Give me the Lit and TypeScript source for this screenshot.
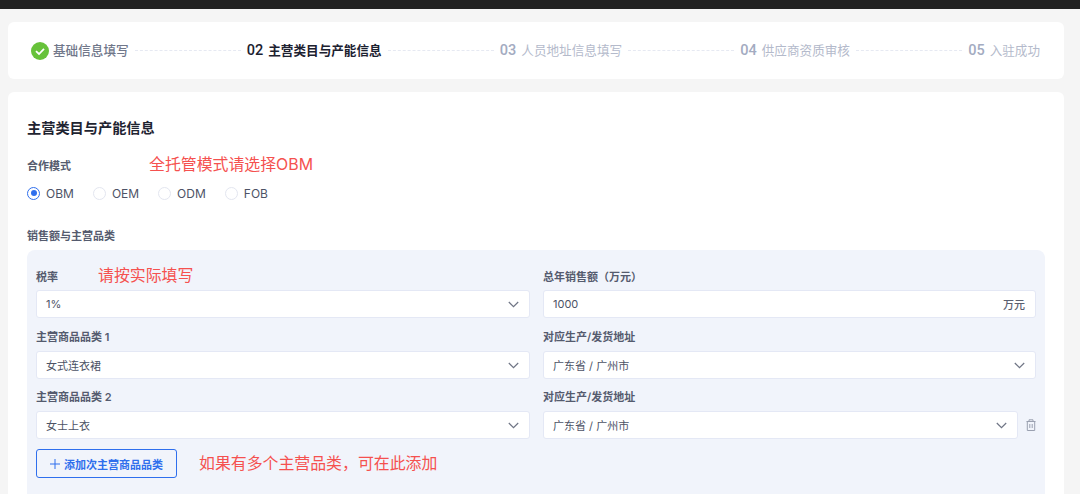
import { LitElement, html, css } from "lit";
import { customElement } from "lit/decorators.js";

const chevron = html`<svg class="chev" width="11" height="7" viewBox="0 0 11 7" fill="none"><path d="M.8 1 5.500 5.700 10.200 1" stroke="#6f7585" stroke-width="1.200"/></svg>`;

@customElement("app-root")
export class AppRoot extends LitElement {
  static styles = css`
    :host { display: block; width: 1080px; height: 494px; overflow: hidden; background: #f5f5f5;
      font-family: Inter, "Noto Sans CJK SC", "Noto Sans", sans-serif; color: #333a4d; }
    .top { height: 9px; background: #222222; }
    .wrap { padding: 13px 16px 0 8px; display: flex; flex-direction: column; gap: 13px; }
    .card { background: #fff; border-radius: 6px; }
    .steps { height: 57px; display: flex; align-items: center; padding: 0 24px 0 23px; gap: 6px; font-size: 12.600px; }
    .step { display: flex; align-items: center; gap: 5px; color: #b4bacb; white-space: nowrap; }
    .step span { padding-bottom: 2px; }
    .step b { font-family: Roboto, sans-serif; font-weight: 500; font-size: 14.500px; color: #a3abc1; }
    .step.done { color: #70778a; gap: 4px; font-weight: 500; }
    .step.active { color: #1c2130; font-weight: 600; }
    .step.active b { color: #1c2130; font-weight: 500; }
    .line { flex: 1; height: 0; border-top: 1px dashed #e6e9f2; }
    .main { padding: 26px 19px 0; height: 420px; }
    h2 { margin: 0; font-size: 14.200px; line-height: 20px; font-weight: 600; color: #1f2431; }
    .lab { font-size: 11px; line-height: 16px; font-weight: 600; color: #555b6e; }
    .labrow { display: flex; align-items: center; height: 16px; }
    .note { color: #f5514f; font-size: 15.900px; line-height: 20px; white-space: nowrap; margin-top: -3px; }
    .mode { margin-top: 20px; }
    .mode .note { margin-left: 78px; }
    .radios { display: flex; align-items: center; margin-top: 9px; height: 20px; font-size: 12px; color: #4d5366; }
    .radio { display: flex; align-items: center; gap: 6px; margin-right: 19px; }
    .dot { width: 13px; height: 13px; box-sizing: border-box; border-radius: 50%; border: 1px solid #e3e6f0; background: #fff; }
    .dot.on { border: 1.500px solid #2f6fed; display: flex; align-items: center; justify-content: center; }
    .dot.on::after { content: ""; width: 6px; height: 6px; border-radius: 50%; background: #2f6fed; }
    .sales { margin-top: 25px; }
    .panel { margin-top: 6px; background: #f1f4fb; border-radius: 8px; padding: 19px 9px 16px; height: 240px; box-sizing: content-box; }
    .grid { display: grid; grid-template-columns: 494px 493px; column-gap: 13px; }
    .cell .note { margin-left: 40px; }
    .field { margin-top: 6px; height: 28px; box-sizing: border-box; background: #fff; border: 1px solid #e4e8f5; border-radius: 3px;
      display: flex; align-items: center; justify-content: space-between; padding: 0 10px 0 9px; font-size: 11px; color: #4d5366; }
    .first .field { margin-top: 5px; }
    .unit { color: #5b6070; font-weight: 500; }
    .row { margin-top: 11px; }
    .row.r3 { margin-top: 10px; }
    .withtrash { display: flex; align-items: flex-start; gap: 8px; }
    .withtrash .field { flex: 1; }
    .trash { margin-top: 14px; width: 10px; height: 12px; flex: none; }
    .actions { display: flex; align-items: center; margin-top: 10px; }
    .actions .note { margin: 0 0 0 22px; }
    button { font: inherit; width: 141px; height: 29px; box-sizing: border-box; background: #fff0; border: 1px solid #2f6fed; border-radius: 3px;
      color: #2f6fed; font-size: 11px; font-weight: 600; display: flex; align-items: center; justify-content: center; gap: 4px; padding: 0; }
  `;

  private step(n: string, t: string) {
    return html`<div class="step"><b>${n}</b><span>${t}</span></div>`;
  }
  private radio(t: string, on = false) {
    return html`<div class="radio"><span class="dot ${on ? "on" : ""}"></span>${t}</div>`;
  }
  private select(v: string) {
    return html`<div class="field"><span>${v}</span>${chevron}</div>`;
  }

  render() {
    return html`
      <div class="top"></div>
      <div class="wrap">
        <div class="card steps">
          <div class="step done">
            <svg width="18" height="18" viewBox="0 0 18 18"><circle cx="9" cy="9" r="9" fill="#67c23a"/><path d="M5 9.200 8 12l5-5.200" fill="none" stroke="#fff" stroke-width="1.800"/></svg>
            <span>基础信息填写</span>
          </div>
          <div class="line"></div>
          <div class="step active"><b>02</b><span>主营类目与产能信息</span></div>
          <div class="line"></div>
          ${this.step("03", "人员地址信息填写")}
          <div class="line"></div>
          ${this.step("04", "供应商资质审核")}
          <div class="line"></div>
          ${this.step("05", "入驻成功")}
        </div>
        <div class="card main">
          <h2>主营类目与产能信息</h2>
          <div class="labrow mode"><span class="lab">合作模式</span><span class="note">全托管模式请选择OBM</span></div>
          <div class="radios">${this.radio("OBM", true)}${this.radio("OEM")}${this.radio("ODM")}${this.radio("FOB")}</div>
          <div class="lab sales">销售额与主营品类</div>
          <div class="panel">
            <div class="grid">
              <div class="cell first">
                <div class="labrow"><span class="lab">税率</span><span class="note">请按实际填写</span></div>
                ${this.select("1%")}
              </div>
              <div class="cell first">
                <div class="labrow"><span class="lab">总年销售额（万元）</span></div>
                <div class="field"><span>1000</span><span class="unit">万元</span></div>
              </div>
              <div class="cell row">
                <div class="labrow"><span class="lab">主营商品品类 1</span></div>
                ${this.select("女式连衣裙")}
              </div>
              <div class="cell row">
                <div class="labrow"><span class="lab">对应生产/发货地址</span></div>
                ${this.select("广东省 / 广州市")}
              </div>
              <div class="cell row r3">
                <div class="labrow"><span class="lab">主营商品品类 2</span></div>
                ${this.select("女士上衣")}
              </div>
              <div class="cell row r3">
                <div class="labrow"><span class="lab">对应生产/发货地址</span></div>
                <div class="withtrash">
                  ${this.select("广东省 / 广州市")}
                  <svg class="trash" viewBox="0 0 10 12" fill="none" stroke="#9aa0b0" stroke-width="1"><path d="M.5 2.500h9M3 2.500V.8h4v1.700M1.300 2.500v9h7.400v-9M3.800 5v4M6.200 5v4"/></svg>
                </div>
              </div>
            </div>
            <div class="actions">
              <button><svg width="10" height="10" viewBox="0 0 10 10"><path d="M5 0v10M0 5h10" stroke="#2f6fed" stroke-width="1"/></svg>添加次主营商品品类</button>
              <span class="note">如果有多个主营品类，可在此添加</span>
            </div>
          </div>
        </div>
      </div>
    `;
  }
}
